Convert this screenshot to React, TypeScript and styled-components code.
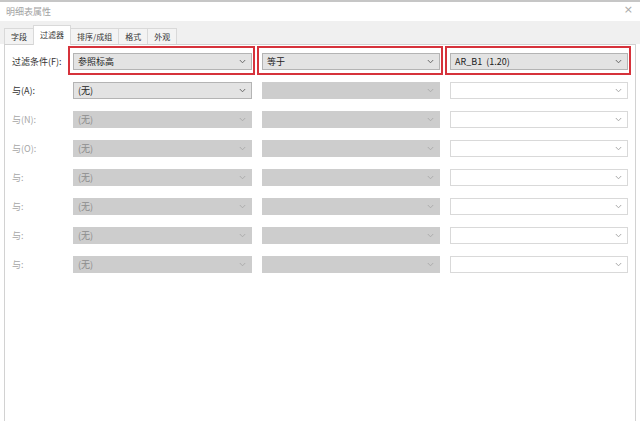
import React from 'react'
import styled, { createGlobalStyle, css } from 'styled-components'

const GlobalStyle = createGlobalStyle`
  html, body {
    margin: 0;
    padding: 0;
    background: #fff;
  }
  body {
    font-family: "Noto Sans CJK SC", "Noto Sans", sans-serif;
  }
`

const Window = styled.div`
  width: 640px;
  height: 421px;
  display: flex;
  flex-direction: column;
  background: #fff;
  border-top: 2px solid #c6c6c6;
  box-sizing: border-box;
  overflow: hidden;
`

const TitleBar = styled.div`
  height: 19px;
  flex: none;
  display: flex;
  align-items: center;
  justify-content: space-between;
  padding: 0 7px 0 6px;
  font-size: 9px;
  color: #a2a2a2;
  .close {
    font-family: "DejaVu Sans", sans-serif;
    font-size: 11px;
    color: #a8a8a8;
    margin-top: -4px;
  }
`

const TabStrip = styled.div`
  height: 23px;
  flex: none;
  display: flex;
  align-items: flex-end;
  background: #f0f0f0;
  padding-left: 4px;
`

const Tab = styled.div<{ $active?: boolean }>`
  height: 16px;
  box-sizing: border-box;
  display: flex;
  align-items: center;
  padding: 0 6px;
  margin-right: -1px;
  border: 1px solid #d9d9d9;
  border-bottom: none;
  background: #f3f3f3;
  font-size: 8px;
  color: #333;
  ${p => p.$active && css`
    height: 20px;
    margin-bottom: -1px;
    background: #fff;
    position: relative;
    z-index: 1;
    align-items: flex-start;
    padding-top: 3px;
  `}
`

const Panel = styled.div`
  flex: 1;
  margin: 0 4px;
  background: #fff;
  border: 1px solid #d2d2d2;
  border-bottom: none;
  padding: 2px 0 0 7px;
`

const Row = styled.div`
  height: 29px;
  display: grid;
  grid-template-columns: 51px 179px 178px 178px;
  column-gap: 10px;
  align-items: center;
`

const Label = styled.div<{ $disabled?: boolean }>`
  font-size: 9px;
  white-space: nowrap;
  color: ${p => (p.$disabled ? '#a6a6a6' : '#333')};
`

type Kind = 'enabled' | 'disabled' | 'blank'

const kindStyles = {
  enabled: css`
    background: #e3e3e3;
    border-color: #b4b4b4;
    color: #222;
  `,
  disabled: css`
    background: #cdcdcd;
    border-color: #cdcdcd;
    color: #8c8c8c;
  `,
  blank: css`
    background: #fff;
    border-color: #d9d9d9;
    color: #222;
  `,
}

const chevronColor = { enabled: '#606060', disabled: '#a9a9a9', blank: '#a0a0a0' }

const Combo = styled.div<{ $kind: Kind; $marked?: boolean }>`
  position: relative;
  height: 17px;
  box-sizing: border-box;
  border: 1px solid;
  display: flex;
  align-items: center;
  justify-content: space-between;
  padding: 0 5px 0 4px;
  font-size: 9px;
  white-space: pre;
  ${p => kindStyles[p.$kind]}
  ${p => p.$marked && css`
    &::after {
      content: '';
      position: absolute;
      left: -6px;
      right: -4px;
      top: -8px;
      bottom: -6px;
      border: 2px solid #d6323b;
      pointer-events: none;
    }
  `}
`

const Chevron = ({ color }: { color: string }) => (
  <svg width="7" height="5" viewBox="0 0 7 5">
    <path d="M0.8 1 L3.5 3.8 L6.2 1" fill="none" stroke={color} strokeWidth="0.9" />
  </svg>
)

const Select = ({ kind, text, marked }: { kind: Kind; text?: string; marked?: boolean }) => (
  <Combo $kind={kind} $marked={marked}>
    <span>{text ?? ''}</span>
    <Chevron color={chevronColor[kind]} />
  </Combo>
)

const tabs = ['字段', '过滤器', '排序/成组', '格式', '外观']

const andRows = ['与(N):', '与(O):', '与:', '与:', '与:', '与:']

const App = () => {
  return (
    <>
      <GlobalStyle />
      <Window>
        <TitleBar>
          <span>明细表属性</span>
          <span className="close">×</span>
        </TitleBar>
        <TabStrip>
          {tabs.map(t => (
            <Tab key={t} $active={t === '过滤器'}>{t}</Tab>
          ))}
        </TabStrip>
        <Panel>
          <Row>
            <Label>过滤条件(F):</Label>
            <Select kind="enabled" text="参照标高" marked />
            <Select kind="enabled" text="等于" marked />
            <Select kind="enabled" text="AR_B1  (1.20)" marked />
          </Row>
          <Row>
            <Label>与(A):</Label>
            <Select kind="enabled" text="(无)" />
            <Select kind="disabled" />
            <Select kind="blank" />
          </Row>
          {andRows.map((l, i) => (
            <Row key={i}>
              <Label $disabled>{l}</Label>
              <Select kind="disabled" text="(无)" />
              <Select kind="disabled" />
              <Select kind="blank" />
            </Row>
          ))}
        </Panel>
      </Window>
    </>
  )
}

export default App
